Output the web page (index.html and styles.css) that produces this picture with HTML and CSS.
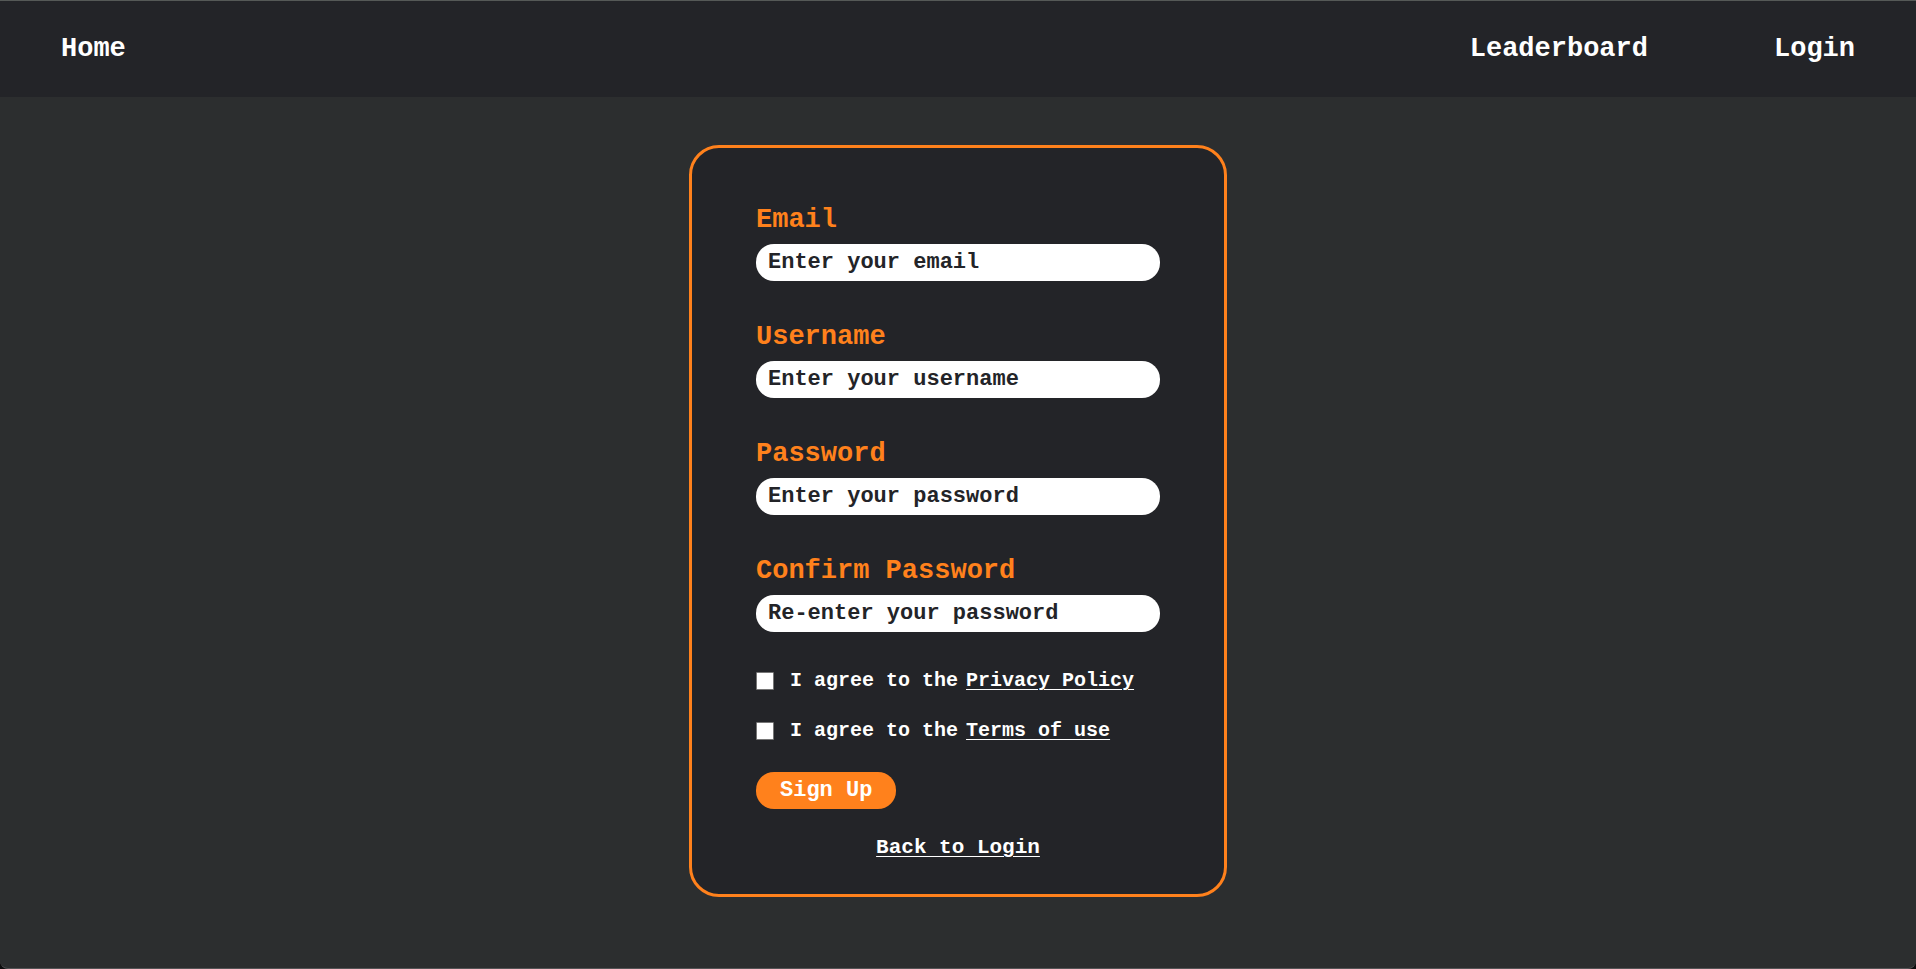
FILE: index.html
```html
<!DOCTYPE html>
<html lang="en">
<head>
<meta charset="utf-8">
<meta name="viewport" content="width=device-width, initial-scale=1">
<title>Sign Up</title>
<link rel="stylesheet" href="styles.css">
</head>
<body>
<div class="page">
  <header class="header">
    <nav class="nav">
      <a class="nav-link" href="#home">Home</a>
      <div class="nav-group">
        <a class="nav-link" href="#leaderboard">Leaderboard</a>
        <a class="nav-link" href="#login">Login</a>
      </div>
    </nav>
  </header>
  <main class="main">
    <form class="card">
      <div class="fields">
        <div class="field">
          <label class="label" for="email">Email</label>
          <input class="input" id="email" type="email" placeholder="Enter your email">
        </div>
        <div class="field">
          <label class="label" for="username">Username</label>
          <input class="input" id="username" type="text" placeholder="Enter your username">
        </div>
        <div class="field">
          <label class="label" for="password">Password</label>
          <input class="input" id="password" type="password" placeholder="Enter your password">
        </div>
        <div class="field">
          <label class="label" for="confirm">Confirm Password</label>
          <input class="input" id="confirm" type="password" placeholder="Re-enter your password">
        </div>
      </div>
      <div class="checks">
        <div class="check">
          <input class="box" id="privacy" type="checkbox">
          <label for="privacy">I agree to the</label>
          <a class="link" href="#privacy-policy">Privacy Policy</a>
        </div>
        <div class="check">
          <input class="box" id="terms" type="checkbox">
          <label for="terms">I agree to the</label>
          <a class="link" href="#terms-of-use">Terms of use</a>
        </div>
      </div>
      <button class="submit" type="submit">Sign Up</button>
      <a class="link back" href="#login">Back to Login</a>
    </form>
  </main>
</div>
</body>
</html>
```

FILE: styles.css
```css
* {
  box-sizing: border-box;
}

html {
  background: #0c0c0d;
}

body {
  margin: 0;
  font-family: "Liberation Mono", monospace;
  font-weight: 700;
  color: #fff;
}

.page {
  display: flex;
  flex-direction: column;
  min-height: 100vh;
  overflow: hidden;
  background: #2c2e2f;
  border-top: 1px solid #555957;
  border-bottom: 1px solid #555456;
  border-radius: 0 0 8px 8px;
}

.header {
  background: #232428;
}

.nav {
  display: flex;
  align-items: center;
  justify-content: space-between;
  min-height: 96px;
  padding: 0 61px;
}

.nav-group {
  display: flex;
  gap: 126px;
}

.nav-link {
  color: #fff;
  font-size: 27px;
  line-height: 28px;
  text-decoration: none;
}

.main {
  display: flex;
  justify-content: center;
  padding: 48px 16px;
}

.card {
  display: flex;
  flex-direction: column;
  width: 100%;
  max-width: 538px;
  padding: 58px 64px 34px;
  background: #232428;
  border: 3px solid #ff811c;
  border-radius: 30px;
}

.fields {
  display: flex;
  flex-direction: column;
  gap: 42px;
}

.field {
  display: flex;
  flex-direction: column;
  gap: 10px;
}

.label {
  color: #ff811c;
  font-size: 27px;
  line-height: 28px;
}

.input {
  width: 100%;
  height: 37px;
  padding: 0 12px;
  color: #232428;
  background: #fff;
  border: 0;
  border-radius: 18px;
  font: inherit;
  font-size: 22px;
}

.input::placeholder {
  color: #232428;
  opacity: 1;
}

.checks {
  display: flex;
  flex-direction: column;
  gap: 28px;
  margin-top: 38px;
}

.check {
  display: flex;
  align-items: center;
  gap: 8px;
  font-size: 20px;
  line-height: 22px;
}

.box {
  appearance: none;
  width: 18px;
  height: 18px;
  margin: 0 8px 0 0;
  background: #fff;
  border: 1px solid #767676;
  border-radius: 1px;
}

.box:checked {
  background: #ff811c;
}

.link {
  color: #fff;
  text-decoration: underline;
  text-decoration-thickness: 1px;
  text-underline-offset: 3px;
}

.submit {
  align-self: flex-start;
  height: 37px;
  margin-top: 30px;
  padding: 0 24px;
  color: #fff;
  background: #ff811c;
  border: 0;
  border-radius: 18px;
  font: inherit;
  font-size: 22px;
  cursor: pointer;
}

.back {
  align-self: center;
  margin-top: 27px;
  font-size: 21px;
  line-height: 24px;
}
```
